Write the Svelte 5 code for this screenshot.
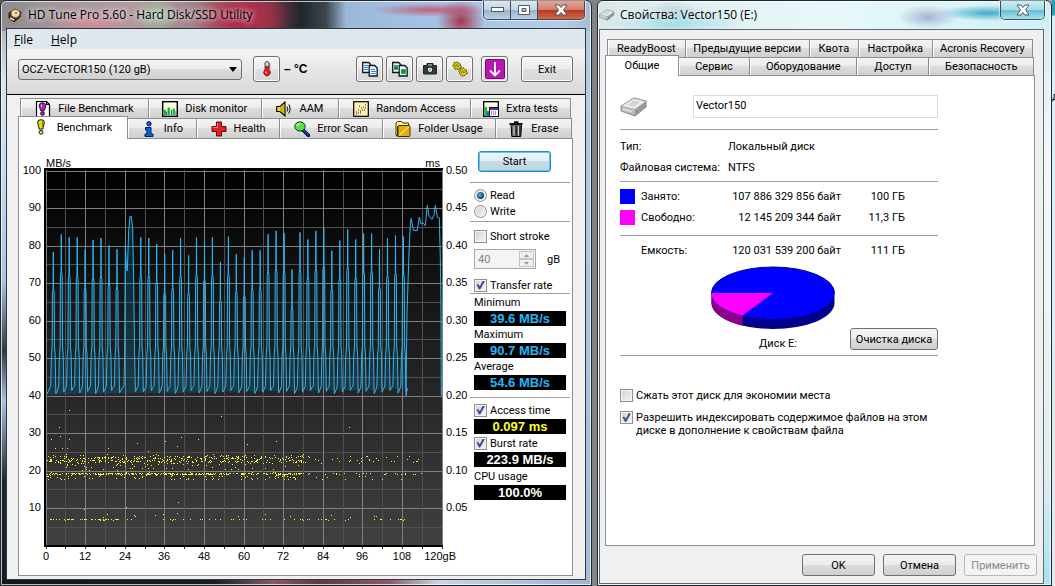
<script>
    const topTabs = [
        {label: 'File Benchmark', icon: 'filebench', size: 128},
        {label: 'Disk monitor', icon: 'monitor', size: 113},
        {label: 'AAM', icon: 'speaker', size: 77},
        {label: 'Random Access', icon: 'random', size: 132},
        {label: 'Extra tests', icon: 'extra', size: 100},
    ];
    const bottomTabs = [
        {label: 'Benchmark', icon: 'bench', size: 109, active: true},
        {label: 'Info', icon: 'info', size: 69},
        {label: 'Health', icon: 'health', size: 83},
        {label: 'Error Scan', icon: 'scan', size: 103},
        {label: 'Folder Usage', icon: 'folder', size: 113},
        {label: 'Erase', icon: 'erase', size: 76},
    ];
    const propTop = [
        {label: 'ReadyBoost', size: 78},
        {label: 'Предыдущие версии', size: 125},
        {label: 'Квота', size: 49},
        {label: 'Настройка', size: 74},
        {label: 'Acronis Recovery', size: 101},
    ];
    const propBottom = [
        {label: 'Общие', size: 73, active: true},
        {label: 'Сервис', size: 71},
        {label: 'Оборудование', size: 108},
        {label: 'Доступ', size: 72},
        {label: 'Безопасность', size: 105},
    ];
    const tools = [
        {icon: 'copy', title: 'Copy text'},
        {icon: 'copyimg', title: 'Copy screenshot'},
        {icon: 'camera', title: 'Save screenshot'},
        {icon: 'options', title: 'Options'},
    ];

    let mode = $state('read');
    let shortStroke = $state(false);
    let transferRate = $state(true);
    let accessTime = $state(true);
    let burstRate = $state(true);
    let compress = $state(false);
    let indexing = $state(true);
    let volume = $state('Vector150');

    // chart scales: gB along the bottom, MB/s up the side
    const px = (gb) => 27.5 + gb * 3.3;
    const py = (mb) => 406.5 - mb * 3.75;

    const gbTicks = Array.from({length: 21}, (_, i) => i * 6);
    const mbTicks = Array.from({length: 21}, (_, i) => i * 5);

    const peaks = [78.3, 83, 82.2, 82.2, 79, 81.5, 82, 80, 79, 0, 0, 82.2, 82, 80.4, 77.7, 78.8, 82, 77.4,
        82.2, 81, 82.2, 75.6, 82.4, 77.7, 76.8, 78.7, 78.7, 83, 83.9, 83.3, 73.6, 83.5, 81.6, 83.9, 84.6,
        78.6, 81.3, 84.3, 81.6, 83.2, 83.2, 79, 82, 82.7, 82.4];

    function tracePoints(){
        const pts = [[27.5, 40.3], [29, 41]];
        peaks.forEach((peak, k) => {
            const x = 34.3 + k * 7.957;
            const low = 40.5 + (k * 7 % 5) * 0.2;
            if(k === 9){
                // cache burst around 25 gB
                pts.push([105, 42.6], [105.6, 51], [106.3, 80], [107.3, 75], [108.3, 73.2], [109.7, 84], [111, 87.8],
                    [112.3, 87.8], [113.6, 85], [114.6, 71.5], [115.6, 51], [116.4, 41]);
            } else if(peak){
                pts.push([x - 2.6, 42.6], [x - 1.9, 51], [x - 1.2, 53], [x - 0.9, peak - 11], [x - 0.2, peak - 10],
                    [x, peak], [x + 0.2, peak - 10], [x + 0.9, peak - 11], [x + 1.2, 53], [x + 1.9, 51],
                    [x + 2.5, low], [x + 4, low + 0.8]);
            }
        });
        return pts;
    }

    // the unfilled part of the drive, past 108 gB
    const tail = [[387, 40], [388, 62], [390, 78], [391, 84], [392, 87.2], [394.6, 84], [398.3, 84], [400.3, 87.6],
        [402, 85.8], [404, 86], [406.3, 85.3], [408.3, 90.7], [410, 87.8], [413, 87], [415, 88.2], [416.3, 90.7],
        [418.3, 87.6], [420.3, 87.4], [421.3, 76.8], [422, 62], [422.3, 40]];

    function toLine(pts){
        return pts.map(([x, mb]) => x.toFixed(1) + ',' + py(mb).toFixed(1)).join(' ');
    }

    function accessDots(){
        let seed = 20131;
        const rnd = () => (seed = (seed * 16807) % 2147483647) / 2147483647;
        let d = '';
        const dot = (gb, mb) => {
            d += `M${Math.round(px(gb))} ${Math.round(py(mb)) + 0.5}h1`;
        };
        const spread = () => rnd() < 0.75 ? rnd() * 78 : rnd() * 114;
        for(let i = 0; i < 150; i++) dot(spread(), 22.3 + rnd() * 0.6);
        for(let i = 0; i < 170; i++) dot(spread(), 23 + rnd());
        for(let i = 0; i < 150; i++) dot(spread(), 20 + rnd() * 4.4);
        for(let i = 0; i < 300; i++) dot(spread(), 19.1 + rnd() * 0.2);
        for(let i = 0; i < 110; i++) dot(spread(), 17.6 + rnd() * 2);
        for(let i = 0; i < 95; i++) dot(rnd() < 0.3 ? rnd() * 22 : rnd() * 112, 6.9 + rnd() * 0.3);
        for(let i = 0; i < 14; i++) dot(rnd() * 100, 7.5 + rnd() * 1.2);
        [[6.7, 36.2], [3.8, 31.5], [4, 29.3], [1.5, 28.5], [6.8, 28.5], [2.6, 26], [4.8, 26], [6.2, 26], [53, 34.6],
            [91.8, 31.7], [69.5, 27.8], [36, 28], [40.8, 29], [46, 28.5], [27.5, 27.4], [39.5, 26.5], [18.6, 26],
            [60.7, 27], [30.8, 25.2], [24, 10.3], [39.7, 11.6], [11.5, 9.8]].forEach(([gb, mb]) => dot(gb, mb));
        return d;
    }

    const body = tracePoints();
    const shade = toLine(body);
    const trace = toLine([...body, ...tail]);
    const dots = accessDots();
</script>

{#snippet icon(name)}
    <svg class="icon" viewBox="0 0 16 16" width="16" height="16" aria-hidden="true">
        {#if name === 'filebench'}
            <path d="M1.500 .5h10l3 3v12h-13z" fill="#fff" stroke="#000" stroke-width="1.200"/>
            <path d="M11.500 .5v3h3" fill="none" stroke="#000"/>
            <path d="M7.500 1.800c2.500 0 3.600 1.300 3.300 3.300L9.300 9.800H5.700L4.200 5.100c-.3-2 .8-3.300 3.300-3.300z" fill="#b020b8" stroke="#000" stroke-width=".8"/>
            <circle cx="7.500" cy="12.500" r="1.900" fill="#b020b8" stroke="#000" stroke-width=".8"/>
            <path d="M6.500 3.500v3" stroke="#f0b0f4"/>
        {:else if name === 'monitor'}
            <rect x=".7" y=".7" width="14.600" height="14.600" fill="#ffffd8" stroke="#000" stroke-width="1.400"/>
            <path d="M2 14V9h1.500v5M6 14V7h1.500v7M11 14V8h1.500v6" fill="#18b830" stroke="#18b830"/>
            <path d="M4.500 14.500v-4M9.500 14.500V9M14 14.500V10" fill="none" stroke="#1870d0"/>
        {:else if name === 'speaker'}
            <path d="M.7 5.500h3.300L9 1v14L4 10.500H.7z" fill="#ecd820" stroke="#000" stroke-width="1.100"/>
            <path d="M5 5v6M7 4v8" stroke="#a89000" fill="none"/>
            <path d="M11 5.500q1.500 2.500 0 5M12.800 3.500q2.500 4.500 0 9" fill="none" stroke="#222" stroke-width="1.100"/>
        {:else if name === 'random'}
            <rect x=".7" y=".7" width="14.600" height="14.600" fill="#ffefb0" stroke="#000" stroke-width="1.200"/>
            <path d="M3 11h1M5 12h1M5 9h1M7 10h1M8 7h1M9 9h1M10 6h1M12 4h1M11 9h1M3 13h1M7 12h1M12 7h1M6 5h1" stroke="#202020"/>
        {:else if name === 'extra'}
            <rect x=".7" y=".7" width="14.600" height="14.600" fill="#ffffe0" stroke="#000" stroke-width="1.300"/>
            <path d="M1.500 15V6H4v9z" fill="#18b830"/><path d="M4 15v-5h2v5z" fill="#1870d0"/>
            <rect x="6.500" y="6.500" width="9" height="9" fill="#fff" stroke="#200040"/>
            <path d="M7 8h8" stroke="#6030a0" stroke-width="2"/>
            <path d="M8 11h6M8 13h6" stroke="#601070" stroke-dasharray="1 1"/>
        {:else if name === 'bench'}
            <path d="M7 .7c2.300 0 3.400 1.200 3.200 3.300L8.800 10H5.200L3.800 4C3.600 1.900 4.700.7 7 .7z" fill="#e2e010" stroke="#222" stroke-width="1.100"/>
            <path d="M8.500 2.500v5" stroke="#8a8a00"/>
            <circle cx="7" cy="13.300" r="2" fill="#e2e010" stroke="#222"/>
        {:else if name === 'info'}
            <circle cx="8" cy="2.800" r="2.200" fill="#1060d8" stroke="#001a60"/>
            <path d="M4.500 6.500h5.500v6.500h2v2.500h-8v-2.500h2V9h-1.500z" fill="#1060d8" stroke="#001a60"/>
        {:else if name === 'health'}
            <path d="M5.500 1h5v4.500H15v5h-4.500V15h-5v-4.500H1v-5h4.500z" fill="#e02028" stroke="#700008"/>
            <path d="M6.500 2v4.500H2" fill="none" stroke="#ff8080"/>
        {:else if name === 'scan'}
            <path d="M9 9l5.500 5.500" stroke="#081058" stroke-width="3.600" stroke-linecap="round"/>
            <path d="M9.500 9l5 5" stroke="#2040c0" stroke-width="1.200"/>
            <ellipse cx="6" cy="5.500" rx="5.200" ry="4.600" fill="#58e048" stroke="#084010"/>
            <path d="M3 5q1-2.300 3.500-2.300" stroke="#d8ffd0" stroke-width="1.200" fill="none"/>
        {:else if name === 'folder'}
            <path d="M1 4V2l1.500-1.500h4L8 2h5.500v3" fill="#fff080" stroke="#403000"/>
            <path d="M1 4v10l1.500 1.500V5.500h12" fill="#fff080" stroke="#403000"/>
            <rect x="3" y="4.500" width="12" height="11" rx="1" fill="#dcb010" stroke="#403000"/>
            <path d="M4 14.500l10-9" stroke="#f6d850" stroke-width="1.500"/>
        {:else if name === 'erase'}
            <path d="M3 3.500h10.500l-.7 12H3.800z" fill="#606060" stroke="#000"/>
            <path d="M6 5v9.500M10.500 5v9.500" stroke="#c8c8c8" stroke-width="1.200"/>
            <path d="M8.200 5v9.500M12 5v9.500" stroke="#101010"/>
            <path d="M1.500 3h13M6 1.200h4.500" stroke="#101010" stroke-width="1.800"/>
        {:else if name === 'copy' || name === 'copyimg'}
            <path d="M.7 1.500h6l2 2v8h-8z" fill="#e8f4ff" stroke="#101820" stroke-width="1.300"/>
            <path d="M7.200 4.500h5.500l2.500 2.500v8h-8z" fill="#e8f4ff" stroke="#101820" stroke-width="1.300"/>
            {#if name === 'copy'}
                <path d="M2 4.500h4M2 6.500h4M2 8.500h4M9 8.500h4M9 10.500h5M9 12.500h5" stroke="#3088d8"/>
            {:else}
                <path d="M2 4h4v5H2zM9 8h5v5H9z" fill="#30b038"/>
                <path d="M3 6h2v2H3zM10.500 9.500h2v2h-2z" fill="#1848b0"/>
            {/if}
        {:else if name === 'camera'}
            <path d="M5 4.500V2.500h6v2M1.500 4.500h13V13h-13z" fill="#303c3c" stroke="#202828" stroke-linejoin="round"/>
            <path d="M6 4h4" stroke="#c8d4d4"/>
            <circle cx="8" cy="8.700" r="2.800" fill="#e8f0f0" stroke="#101818"/>
            <circle cx="8" cy="8.700" r="1.200" fill="#a0b0b0"/>
        {:else if name === 'options'}
            <path d="M.7 4l1.300-1 .5-2 1.500 1 1.500-1.500 1 2 2 .5v2l1.500 1-2 1-1 1.500-2-.5L3 8.500z" fill="#ddd020" stroke="#6a6000" stroke-width=".9"/>
            <path d="M6.700 10l1.300-1 .5-2 1.500 1 1.500-1.500 1 2 2 .5v2l1.500 1-2 1-1 1.500-2 .5-2-.5-1-1.500z" fill="#ddd020" stroke="#6a6000" stroke-width=".9"/>
            <path d="M2.500 3.500l1.500 3M4.500 3l1 3M7 4l-.5 2M8.500 9.500l1.500 3M10.500 9l1 3M13 10l-.5 2" stroke="#6a6000" stroke-width=".8"/>
        {:else if name === 'thermo'}
            <path d="M6 1.500q2-2 4 0V9q2 1.500 1 4-3 4-6 0-1-2.500 1-4z" fill="#e02020" stroke="#601010" stroke-width=".8"/>
            <path d="M6.500 1.500q1.500-1 3 0V5h-3z" fill="#90e8e8"/>
            <path d="M10 3h1.500M10 5h1.500M10 7h1.500" stroke="#444" stroke-width=".7"/>
            <circle cx="7" cy="11.500" r="1" fill="#ffc0c0"/>
        {/if}
    </svg>
{/snippet}

{#snippet tab(t)}
    <button class="tab" class:active={t.active} role="tab" aria-selected={!!t.active} style="flex-grow: {t.size}">
        {#if t.icon}{@render icon(t.icon)}{/if}
        {t.label}
    </button>
{/snippet}

{#snippet drive(w, h)}
    <svg class="icon" viewBox="0 0 28 20" width={w} height={h} aria-hidden="true">
        <path d="M1 9L14 1l12 3v6L15 19 1 14z" fill="#9a9a9a" stroke="#777" stroke-width=".8"/>
        <path d="M1.500 9L14 1.500 25.500 4.500 15 12z" fill="#ececec"/>
        <path d="M7 8l7-4.500 6 1.500-6 4.500z" fill="#d2d2d2"/>
        <path d="M1.500 9.500L15 12.500V18L1.500 14z" fill="#bdbdbd"/>
        <path d="M3 12l9 2.700" stroke="#eee" stroke-width="1.200"/>
        <path d="M16 15l1.500-1" stroke="#3a3" stroke-width="1.300"/>
    </svg>
{/snippet}

<div class="desktop">
    <main class="window hdtune">
        <header class="titlebar">
            <svg class="icon" viewBox="0 0 16 16" width="16" height="16" aria-hidden="true">
                <path d="M2 6l6-4 6 3-1 5-6 5-5-4z" fill="#4a3018" stroke="#2a1808"/>
                <ellipse cx="8.500" cy="6.500" rx="4.500" ry="4" fill="#f0dcb0" stroke="#806030"/>
                <circle cx="9" cy="6" r="1.200" fill="#a08050"/>
                <path d="M3 11l4 2" stroke="#f4e4c0" stroke-width="1.500"/>
            </svg>
            <h1>HD Tune Pro 5.60 - Hard Disk/SSD Utility</h1>
            <div class="winbuttons">
                <button class="min" aria-label="Minimize"><svg width="13" height="6"><rect x=".5" y=".5" width="12" height="4" fill="#fff" stroke="#535666"/></svg></button>
                <button class="max" aria-label="Maximize"><svg width="12" height="10"><path d="M.5.5h11v9H.5zM4 3.500h4v3H4z" fill="#fff" fill-rule="evenodd" stroke="#535666"/></svg></button>
                <button class="close" aria-label="Close"><svg width="14" height="12" viewBox="0 0 14 12"><path d="M1 1h4l2 2.500L9 1h4L9.500 6 13 11H9L7 8.500 5 11H1l3.500-5z" fill="#fff" stroke="#535666"/></svg></button>
            </div>
        </header>
        <div class="client">
            <nav class="menu">
                <a href="#file"><u>F</u>ile</a>
                <a href="#help"><u>H</u>elp</a>
            </nav>
            <div class="toolbar">
                <span class="combo">
                    <select aria-label="Drive"><option>OCZ-VECTOR150 (120 gB)</option></select>
                </span>
                <button class="tool thermo" aria-label="Temperature">{@render icon('thermo')}</button>
                <output class="temp">– °C</output>
                <div class="tools">
                    {#each tools as t}
                        <button class="tool" aria-label={t.title}>{@render icon(t.icon)}</button>
                    {/each}
                </div>
                <button class="tool save" aria-label="Save">
                    <svg class="icon" viewBox="0 0 20 20" width="20" height="20"><rect x=".5" y=".5" width="19" height="19" rx="1" fill="#b818b0" stroke="#780878"/><path d="M10 3v13M5 11.500l5 5 5-5" fill="none" stroke="#fff" stroke-width="1.800"/></svg>
                </button>
                <button class="tool exit">Exit</button>
            </div>
            <div class="body">
                <div class="tabs back" role="tablist">
                    {#each topTabs as t}{@render tab(t)}{/each}
                </div>
                <div class="tabs front" role="tablist">
                    {#each bottomTabs as t}{@render tab(t)}{/each}
                </div>
                <section class="page">
                    <svg class="chart" viewBox="0 0 451 436" role="img" aria-label="Transfer rate and access time">
                        <defs>
                            <linearGradient id="plotbg" x1="0" y1="0" x2="0" y2="1">
                                <stop offset="0" stop-color="#000"/>
                                <stop offset="1" stop-color="#404040"/>
                            </linearGradient>
                        </defs>
                        <rect x="25" y="29" width="399" height="379" fill="#000"/>
                        <rect x="27" y="31" width="396" height="375" fill="url(#plotbg)"/>
                        <g class="grid">
                            {#each mbTicks as mb, i}
                                <line class:minor={i % 2} x1="27" x2="423" y1={Math.round(py(mb))} y2={Math.round(py(mb))}/>
                            {/each}
                            {#each gbTicks as gb, i}
                                <line class:minor={i % 2} x1={Math.round(px(gb) - 1)} x2={Math.round(px(gb) - 1)} y1="31" y2="406"/>
                                <line class="tick" x1={Math.round(px(gb) - 1)} x2={Math.round(px(gb) - 1)} y1="408" y2="410"/>
                            {/each}
                        </g>
                        <polyline class="shade" points={shade}/>
                        <polyline class="trace" points={trace}/>
                        <path class="dots" d={dots}/>
                        <rect x="25" y="406" width="399" height="2" fill="#000"/>
                        <text x="27" y="28">MB/s</text>
                        <text x="421" y="28" text-anchor="end">ms</text>
                        {#each mbTicks.filter((mb) => mb && mb % 10 === 0) as mb}
                            <text x="22" y={Math.round(py(mb)) + 3} text-anchor="end">{mb}</text>
                            <text x="427" y={Math.round(py(mb)) + 3}>{(mb / 200).toFixed(2)}</text>
                        {/each}
                        {#each gbTicks.filter((gb) => gb % 12 === 0) as gb}
                            {#if gb === 120}
                                <text x="437" y="421" text-anchor="end">120gB</text>
                            {:else}
                                <text x={Math.round(px(gb) - 1)} y="421" text-anchor="middle">{gb}</text>
                            {/if}
                        {/each}
                    </svg>
                    <aside class="side">
                        <button class="start">Start</button>
                        <div class="group modes">
                            <label><input type="radio" name="mode" value="read" bind:group={mode}>Read</label>
                            <label><input type="radio" name="mode" value="write" bind:group={mode}>Write</label>
                        </div>
                        <div class="group stroke">
                            <label><input type="checkbox" bind:checked={shortStroke}>Short stroke</label>
                            <div class="amount">
                                <span class="spin">
                                    <input type="text" value="40" disabled={!shortStroke} aria-label="Short stroke size">
                                    <span class="arrows">
                                        <button disabled={!shortStroke} aria-label="More"><svg width="5" height="3"><path d="M0 3l2.500-3L5 3z" fill="#999"/></svg></button>
                                        <button disabled={!shortStroke} aria-label="Less"><svg width="5" height="3"><path d="M0 0l2.500 3L5 0z" fill="#999"/></svg></button>
                                    </span>
                                </span>
                                gB
                            </div>
                            <label><input type="checkbox" bind:checked={transferRate}>Transfer rate</label>
                        </div>
                        <div class="group rates">
                            <div class="caption">Minimum</div>
                            <output>39.6 MB/s</output>
                            <div class="caption">Maximum</div>
                            <output>90.7 MB/s</output>
                            <div class="caption">Average</div>
                            <output>54.6 MB/s</output>
                        </div>
                        <div class="group others">
                            <label><input type="checkbox" bind:checked={accessTime}>Access time</label>
                            <output class="yellow">0.097 ms</output>
                            <label><input type="checkbox" bind:checked={burstRate}>Burst rate</label>
                            <output class="white">223.9 MB/s</output>
                            <div class="caption">CPU usage</div>
                            <output class="white">100.0%</output>
                        </div>
                    </aside>
                </section>
            </div>
        </div>
    </main>

    <section class="window props">
        <header class="titlebar">
            {@render drive(16, 12)}
            <h2>Свойства: Vector150 (E:)</h2>
            <div class="winbuttons">
                <button class="close" aria-label="Закрыть"><svg width="14" height="12" viewBox="0 0 14 12"><path d="M1 1h4l2 2.500L9 1h4L9.500 6 13 11H9L7 8.500 5 11H1l3.500-5z" fill="#fff" stroke="#535666"/></svg></button>
            </div>
        </header>
        <div class="client">
            <div class="tabs back" role="tablist">
                {#each propTop as t}{@render tab(t)}{/each}
            </div>
            <div class="tabs front" role="tablist">
                {#each propBottom as t}{@render tab(t)}{/each}
            </div>
            <div class="page">
                <div class="sheet">
                    <div class="name">
                        {@render drive(28, 20)}
                        <input type="text" bind:value={volume} aria-label="Имя">
                    </div>
                    <dl>
                        <dt>Тип:</dt><dd>Локальный диск</dd>
                        <dt>Файловая система:</dt><dd>NTFS</dd>
                    </dl>
                    <table class="space">
                        <tbody>
                            <tr><td><i class="used"></i></td><th>Занято:</th><td>107 886 329 856 байт</td><td>100 ГБ</td></tr>
                            <tr><td><i class="free"></i></td><th>Свободно:</th><td>12 145 209 344 байт</td><td>11,3 ГБ</td></tr>
                        </tbody>
                        <tbody class="total">
                            <tr><td></td><th>Емкость:</th><td>120 031 539 200 байт</td><td>111 ГБ</td></tr>
                        </tbody>
                    </table>
                    <div class="usage">
                        <figure>
                            <svg width="124" height="64" viewBox="0 0 124 64" aria-hidden="true">
                                <path d="M.5 27v10a61.500 26 0 0 0 123 0V27z" fill="#00008b"/>
                                <path d="M.5 27v10a61.500 26 0 0 0 31 22.500V49z" fill="#8b008b"/>
                                <ellipse cx="62" cy="27" rx="61.500" ry="26" fill="#00f"/>
                                <path d="M62 27H.5a61.500 26 0 0 0 31 22.500z" fill="#f0f"/>
                                <path d="M.5 27a61.500 26 0 0 1 123 0" fill="none" stroke="#00008b"/>
                            </svg>
                            <figcaption>Диск E:</figcaption>
                        </figure>
                        <button class="push">Очистка диска</button>
                    </div>
                    <div class="checks">
                        <label><input type="checkbox" bind:checked={compress}>Сжать этот диск для экономии места</label>
                        <label><input type="checkbox" bind:checked={indexing}><span>Разрешить индексировать содержимое файлов на этом диске в дополнение к свойствам файла</span></label>
                    </div>
                </div>
            </div>
            <footer>
                <button class="push">OK</button>
                <button class="push">Отмена</button>
                <button class="push" disabled>Применить</button>
            </footer>
        </div>
    </section>
    <div class="behind">д</div>
</div>

<style>
    :global(body) {
        background: #8d9094;
    }
    .desktop {
        display: grid;
        grid-template-columns: minmax(0, 592fr) minmax(0, 460fr) 3px;
        grid-template-rows: minmax(100vh, auto);
        background: linear-gradient(90deg, #55585c, #a4a6a8);
        font: 11px/13px Roboto, "Liberation Sans", sans-serif;
        color: #000;
    }
    .desktop * {
        box-sizing: border-box;
    }
    button, input, select {
        font: inherit;
        color: inherit;
        margin: 0;
        padding: 0;
    }
    .icon {
        flex: none;
        display: block;
    }

    /* window frames */
    .window {
        display: flex;
        flex-direction: column;
        border: 1px solid #23272c;
        border-radius: 6px 6px 0 0;
        box-shadow: inset 0 0 0 1px rgba(255, 255, 255, 0.7);
    }
    .hdtune {
        padding: 0 6px 6px;
        background:
            radial-gradient(ellipse 50px 30px at 240px 16px, #b02c48 30%, transparent),
            radial-gradient(ellipse 24px 20px at 155px 14px, #9fc4a0, transparent),
            radial-gradient(ellipse 44px 16px at 90px 22px, #d08c98, transparent),
            radial-gradient(ellipse 24px 22px at 460px 20px, #a83850, transparent),
            radial-gradient(ellipse 60px 7px at 430px 9px, #c0607c, transparent),
            linear-gradient(90deg, #8c8c90 0, #a09498 50px, #b49aa0 130px, #9a7880 220px, #703844 270px, #20262c 300px, #3c4650 325px, #9cb8d8 345px, #a4c4e8 440px, #b4cce8 560px, #a8bcd0 100%) 0 0 / 100% 30px no-repeat,
            linear-gradient(90deg, #14181c 0, #181c22 36%, #8a5a68 46%, #5c3844 54%, #8c5c6c 66%, #c8d4e4 74%, #9cb4d0) 0 100% / 100% 6px no-repeat,
            linear-gradient(180deg, #a0a0a4 0, #d8e4ec 80px, #c0dcf4 170px, #a8c4e0 280px, #303844 350px, #a8c4e0 400px, #202630 480px, #181c22 100%) 0 0 / 50% 100% no-repeat,
            linear-gradient(180deg, #b4cce4 0, #a4bcd8 100%);
    }
    .props {
        margin-left: 5px;
        padding: 0 7px 1px 1px;
        background:
            radial-gradient(ellipse 70px 14px at 80px 20px, #a4e0ec, transparent),
            radial-gradient(ellipse 30px 16px at 75px 16px, #b0c4cc, transparent),
            radial-gradient(ellipse 30px 12px at 330px 16px, #a8b4d0, transparent),
            radial-gradient(ellipse 50px 8px at 390px 12px, #40acc8, transparent),
            linear-gradient(90deg, #d8e8ec, #e8f8fa 50%, #d0f0f6) 0 0 / 100% 30px no-repeat,
            linear-gradient(180deg, #d8ecf4, #f4f8fa 30%, #e0eef2 80%, #a8e4f0);
    }
    .behind {
        padding-top: 90px;
        overflow: hidden;
        background: linear-gradient(180deg, #28a0b8 0 15px, #d8f0f8 16px 180px, #e4e8ec);
    }
    .titlebar {
        display: flex;
        align-items: center;
        gap: 5px;
        height: 28px;
    }
    .props .titlebar {
        margin-right: -1px;
    }
    h1, h2 {
        margin: 0;
        font: 12px/16px "Open Sans", "Noto Sans", sans-serif;
        white-space: nowrap;
        text-shadow: 0 0 6px #fff, 0 0 6px rgba(255, 255, 255, 0.7);
    }
    .winbuttons {
        display: flex;
        align-self: flex-start;
        margin-left: auto;
        border: 1px solid #444c58;
        border-top: 0;
        border-radius: 0 0 5px 5px;
        overflow: hidden;
        box-shadow: 0 0 0 1px rgba(255, 255, 255, 0.5);
    }
    .winbuttons button {
        display: flex;
        align-items: center;
        justify-content: center;
        width: 27px;
        height: 18px;
        border: 0;
        border-right: 1px solid #444c58;
        background: linear-gradient(180deg, #dce8f4, #c4d4e4 48%, #98b0c8 50%, #b8d0e8);
    }
    .winbuttons .close {
        width: 46px;
        border-right: 0;
        background: linear-gradient(180deg, #e4a498, #d08070 48%, #b83820 50%, #d06848);
    }
    .props .winbuttons .close {
        width: 43px;
        background: linear-gradient(180deg, #c8eef6, #a8dcea 48%, #68bcd4 50%, #a0e4f0);
    }
    .client {
        flex: 1;
        display: flex;
        flex-direction: column;
        background: #f0f0f0;
    }
    .hdtune .client {
        outline: 1px solid #30363e;
    }
    .props .client {
        border: 1px solid #60686c;
        padding: 9px 8px 7px 5px;
    }

    /* menu and toolbar */
    .menu {
        display: flex;
        gap: 18px;
        height: 20px;
        padding: 2px 7px;
        background: #dfe7ef;
        font: 12px/18px "Open Sans", "Noto Sans", sans-serif;
    }
    .menu a {
        color: inherit;
        text-decoration: none;
    }
    .toolbar {
        display: flex;
        align-items: center;
        height: 46px;
        padding: 0 12px 5px 11px;
        border-bottom: 1px solid #000;
        background: linear-gradient(180deg, #f4f4f4, #d8d8d8);
    }
    .combo {
        position: relative;
        flex: 0 1 224px;
    }
    .combo::after {
        content: "";
        position: absolute;
        right: 5px;
        top: 8px;
        border: 4px solid transparent;
        border-top: 5px solid #000;
        border-bottom: 0;
        pointer-events: none;
    }
    .combo select {
        appearance: none;
        display: block;
        width: 100%;
        height: 21px;
        padding: 0 16px 0 3px;
        border: 1px solid #707070;
        border-radius: 3px;
        background: linear-gradient(180deg, #f4f4f4, #ebebeb 48%, #dcdcdc 50%, #d0d0d0);
    }
    .tool {
        display: flex;
        align-items: center;
        justify-content: center;
        flex: none;
        width: 27px;
        height: 26px;
        border: 1px solid #707070;
        border-radius: 3px;
        background: linear-gradient(180deg, #f6f6f6, #ececec 48%, #dedede 50%, #d8d8d8);
        box-shadow: inset 0 0 0 1px #fafafa;
    }
    .thermo {
        margin-left: 11px;
    }
    .temp {
        margin-left: 4px;
        font: bold 12px/14px "Liberation Sans", sans-serif;
    }
    .tools {
        display: flex;
        gap: 3px;
        margin-left: auto;
    }
    .save {
        margin-left: 8px;
    }
    .exit {
        width: 52px;
        margin-left: 13px;
    }

    /* tabs */
    .body {
        flex: 1;
        display: flex;
        flex-direction: column;
        padding: 3px 12px 3px 11px;
    }
    .tabs {
        display: flex;
    }
    .tab {
        display: flex;
        flex: 1 1 0;
        align-items: center;
        justify-content: center;
        gap: 7px;
        min-width: 0;
        height: 20px;
        border: 1px solid #8c8e94;
        border-width: 1px 1px 0 0;
        background: linear-gradient(180deg, #f4f4f4, #ebebeb 48%, #dddddd 50%, #d0d0d0);
        box-shadow: inset 1px 0 0 #fff;
        white-space: nowrap;
    }
    .back {
        margin: 0 2px;
    }
    .back .tab:first-child {
        border-left-width: 1px;
    }
    .front {
        margin-right: 1px;
    }
    .tab.active {
        z-index: 1;
        height: 23px;
        margin: -2px 0 -1px;
        padding-bottom: 2px;
        border-left-width: 1px;
        background: #fff;
    }
    .props .tab {
        height: 18px;
    }
    .props .tab.active {
        height: 21px;
    }
    .page {
        flex: 1;
        display: flex;
        border: 1px solid #8c8e94;
        background: #fff;
    }

    /* chart */
    .chart {
        flex: 1;
        min-width: 0;
        align-self: flex-start;
        font: 11px "Liberation Sans", Arial, sans-serif;
    }
    .grid line {
        stroke: #808080;
        shape-rendering: crispEdges;
    }
    .grid .minor {
        stroke: #505050;
    }
    .grid .tick {
        stroke: #303030;
    }
    .shade {
        fill: rgba(0, 120, 170, 0.25);
    }
    .trace {
        fill: none;
        stroke: #30b4f0;
        stroke-width: 1;
    }
    .dots {
        stroke: #f4f430;
        shape-rendering: crispEdges;
    }

    /* right column of HD Tune */
    .side {
        flex: none;
        width: 102px;
        padding: 12px 2px 0 0;
    }
    .start {
        display: block;
        width: 73px;
        height: 21px;
        margin: 0 0 10px 8px;
        border: 1px solid #3c7fb1;
        border-radius: 3px;
        background: linear-gradient(180deg, #f0f6f8, #e2eef4 48%, #c8dce6 50%, #bcd4e0);
        box-shadow: inset 0 0 0 1px #48d0f4;
    }
    .group {
        border-top: 1px solid #a0a0a0;
        padding-left: 4px;
    }
    .side label, .caption {
        display: flex;
        align-items: center;
        gap: 3px;
        height: 16px;
        white-space: nowrap;
    }
    .modes {
        padding-top: 4px;
        padding-bottom: 2px;
    }
    .stroke {
        padding-top: 6px;
    }
    .amount {
        display: flex;
        align-items: center;
        gap: 11px;
        margin: 5px 0 8px;
    }
    .spin {
        display: flex;
        width: 62px;
        height: 20px;
        padding: 1px;
        border: 1px solid #a8a8a8;
        background: #f4f4f4;
    }
    .spin input {
        flex: 1;
        min-width: 0;
        padding-left: 2px;
        border: 0;
        background: none;
        color: #848484;
    }
    .arrows {
        display: grid;
        width: 15px;
    }
    .arrows button {
        display: grid;
        place-items: center;
        border: 1px solid #c4c4c4;
        background: #f0f0f0;
    }
    .side output {
        display: block;
        height: 15px;
        margin-right: 4px;
        background: #000;
        color: #28b4f4;
        font: bold 13px/15px "Liberation Sans", sans-serif;
        text-align: center;
    }
    .side .yellow {
        color: #ffff20;
    }
    .side .white {
        color: #fff;
    }
    .rates {
        padding-bottom: 7px;
    }
    .rates .caption {
        height: 17px;
    }
    .others {
        padding-top: 3px;
    }
    .others label, .others .caption {
        height: 18px;
    }

    input[type="checkbox"], input[type="radio"] {
        appearance: none;
        flex: none;
        display: grid;
        place-items: center;
        width: 13px;
        height: 13px;
        border: 1px solid #8e8f8f;
        background: linear-gradient(135deg, #cdd0d4, #f8f8f8);
        box-shadow: inset 0 0 0 1px #f4f4f4;
    }
    input[type="radio"] {
        border-radius: 50%;
    }
    input[type="radio"]:checked::before {
        content: "";
        width: 7px;
        height: 7px;
        border-radius: 50%;
        background: radial-gradient(circle at 40% 40%, #60b8e0, #0c3c68 70%);
    }
    input[type="checkbox"]:checked::before {
        content: "";
        width: 9px;
        height: 9px;
        background: #3c4c94;
        clip-path: polygon(6% 48%, 24% 40%, 42% 64%, 76% 0, 98% 8%, 46% 100%, 34% 100%);
    }

    /* properties dialog */
    .sheet {
        flex: 1;
        max-width: 334px;
        padding: 19px 2px 0 14px;
    }
    .name {
        display: flex;
        align-items: center;
        justify-content: space-between;
        padding-bottom: 11px;
        border-bottom: 1px solid #a0a0a0;
    }
    .name input {
        width: 245px;
        height: 23px;
        padding: 0 2px 3px;
        border: 1px solid #d8dcde;
    }
    dl {
        display: grid;
        grid-template-columns: 108px 1fr;
        row-gap: 8px;
        margin: 0;
        padding: 10px 0 7px;
        border-bottom: 1px solid #a0a0a0;
        white-space: nowrap;
    }
    dd {
        margin: 0;
    }
    .space {
        width: 100%;
        border-collapse: collapse;
    }
    .space tbody::before, .space tbody::after {
        content: "";
        display: table-row;
        height: 4px;
    }
    .space tbody::after {
        height: 7px;
    }
    .space .total::before, .space .total::after {
        height: 5px;
    }
    tr {
        height: 21px;
    }
    td, th {
        padding: 0;
        font-weight: normal;
        text-align: right;
        white-space: nowrap;
    }
    td:first-child {
        width: 21px;
    }
    th {
        width: 90px;
        text-align: left;
    }
    td:nth-child(3) {
        width: 110px;
    }
    td:last-child {
        padding-right: 33px;
    }
    .total {
        border-top: 1px solid #a0a0a0;
    }
    td i {
        display: block;
        width: 15px;
        height: 15px;
    }
    .used {
        background: #00f;
    }
    .free {
        background: #f0f;
    }
    .usage {
        display: flex;
        align-items: flex-end;
        justify-content: space-between;
        padding-bottom: 5px;
        border-bottom: 1px solid #a0a0a0;
    }
    figure {
        margin: 0 0 0 91px;
    }
    figure svg {
        display: block;
    }
    figcaption {
        margin-top: 7px;
        padding-left: 10px;
        text-align: center;
    }
    .push {
        width: 73px;
        height: 22px;
        border: 1px solid #707070;
        border-radius: 3px;
        background: linear-gradient(180deg, #f4f4f4, #ebebeb 48%, #dcdcdc 50%, #cfcfcf);
        white-space: nowrap;
    }
    .usage .push {
        width: 88px;
    }
    .push:disabled {
        border-color: #b4b8bc;
        background: #f4f4f4;
        color: #888;
    }
    .checks {
        display: grid;
        gap: 9px;
        padding-top: 33px;
    }
    .checks label {
        display: flex;
        gap: 3px;
    }
    footer {
        display: flex;
        justify-content: flex-end;
        gap: 8px;
        padding-top: 8px;
        margin-right: -2px;
    }
</style>
